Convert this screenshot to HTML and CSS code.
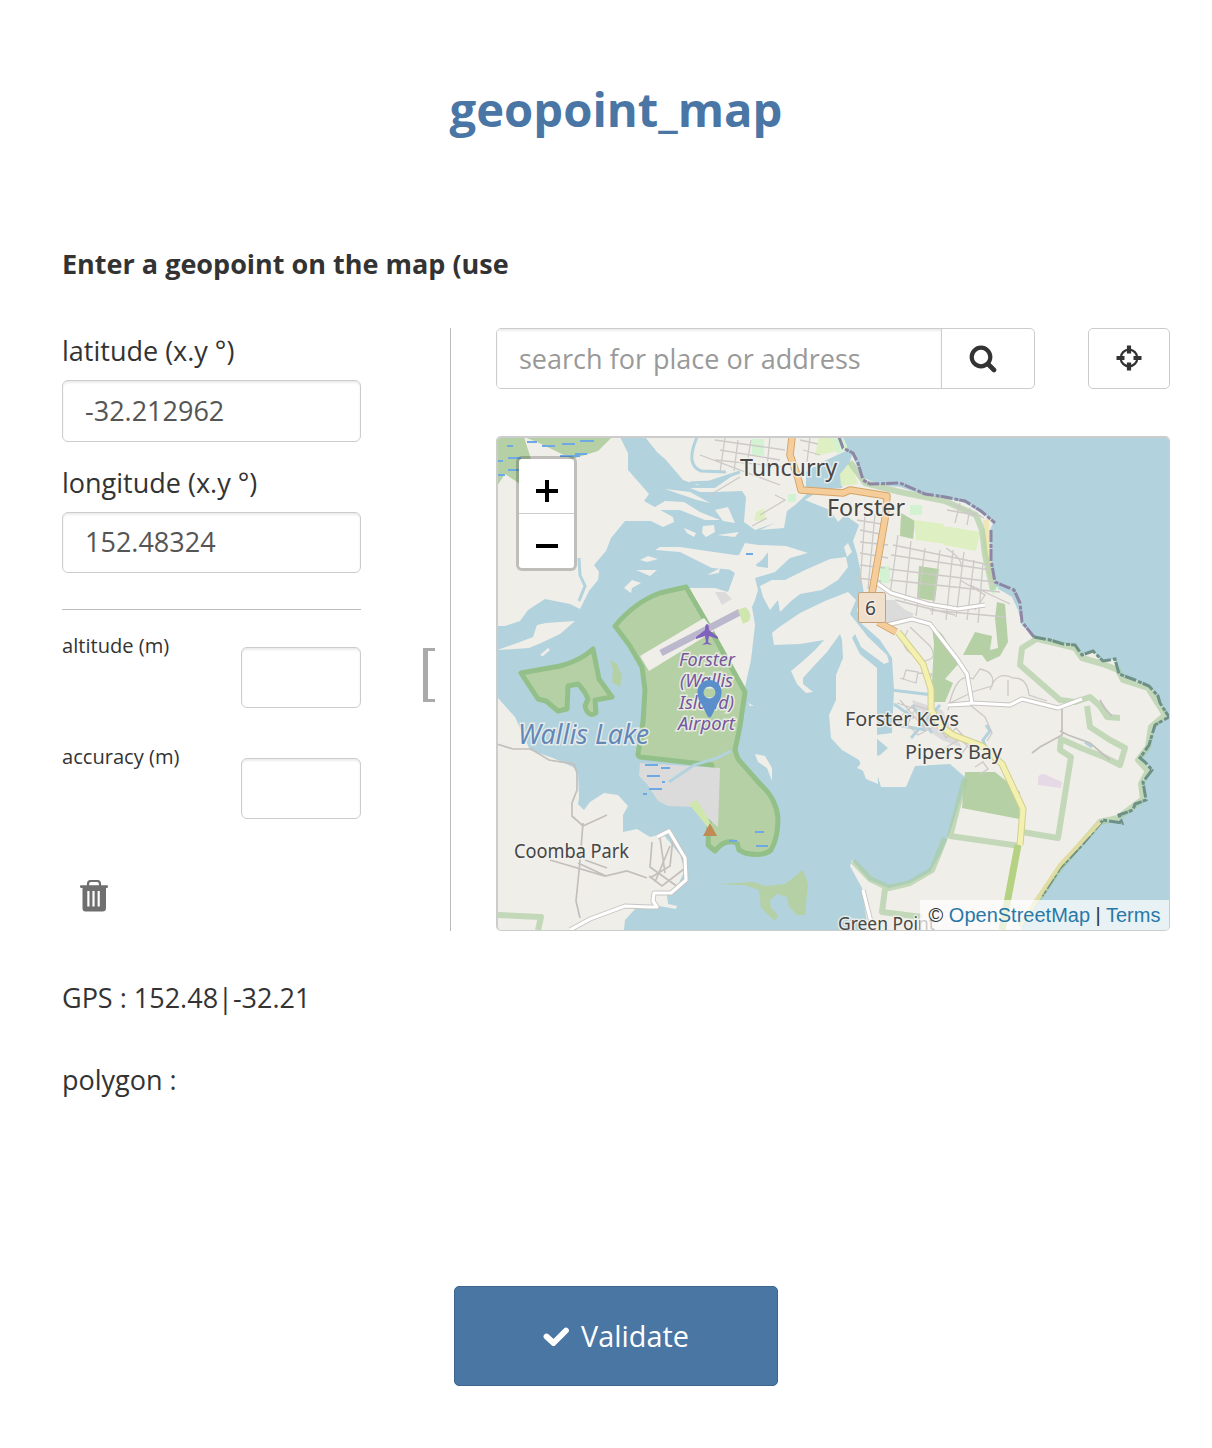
FILE: index.html
```html
<!DOCTYPE html>
<html lang="en">
<head>
<meta charset="utf-8">
<title>geopoint_map</title>
<link rel="stylesheet" href="styles.css">
</head>
<body>
<main class="form">
  <h1 class="title">geopoint_map</h1>
  <h2 class="question">Enter a geopoint on the map (use</h2>
  <section class="geo">
    <div class="coords">
      <label class="big">latitude (x.y °)<input class="field" value="-32.212962"></label>
      <label class="big second">longitude (x.y °)<input class="field" value="152.48324"></label>
      <hr class="rule">
      <label class="small"><span>altitude (m)</span><input class="field"></label>
      <label class="small"><span>accuracy (m)</span><input class="field"></label>
      <button class="trash" aria-label="Clear">
        <svg width="28" height="32" viewBox="0 0 28 32"><path d="M8 6V4q0-3 3-3h6q3 0 3 3v2" fill="none" stroke="#6f6f6f" stroke-width="2.2"/><path fill="#6f6f6f" fill-rule="evenodd" d="M1 5.300h26q1 0 1 1.300t-1 1.300h-1V28q0 3.500-3.500 3.500h-17Q2.500 31.500 2.500 28V8H1Q0 8 0 6.600T1 5.300ZM7.300 11v15.500h2.200V11Zm5.100 0v15.500h2.200V11Zm5.200 0v15.500h2.200V11Z"/></svg>
      </button>
    </div>
    <div class="gutter"><span class="bracket"></span></div>
    <div class="mapside">
      <div class="tools">
        <div class="search"><input class="query" placeholder="search for place or address"><button class="go" aria-label="Search"><svg width="28" height="28" viewBox="0 0 28 28" fill="none" stroke="#333"><circle cx="12" cy="12" r="9.300" stroke-width="4.200"/><path d="M19 19l6 6" stroke-width="4.600" stroke-linecap="round"/></svg></button></div>
        <button class="locate" aria-label="Locate"><svg width="26" height="26" viewBox="0 0 26 26" fill="none" stroke="#333"><circle cx="13" cy="13" r="8.300" stroke-width="2.200"/><path d="M13 .5v8M13 17.500v8M.5 13h8M17.500 13h8" stroke-width="4.200"/></svg></button>
      </div>
      <div class="map">
        <svg class="tiles" viewBox="498 438 671 492" preserveAspectRatio="none">
          <defs>
            <path id="east" d="M805 500 820 490 842 488 852 455 862 477 880 485 900 487 925 495 945 498 965 503 981 513 994 521 990 530 990 560 995 587 1012 597 1018 610 1022 625 1035 638 1050 640 1063 644 1075 645 1082 655 1093 651 1103 661 1115 659 1119 674 1135 680 1149 686 1158 696 1160 703 1169 717 1155 725 1149 745 1140 758 1145 762 1152 770 1143 782 1146 800 1135 804 1133 810 1119 815 1122 823 1103 820 1082 845 1060 868 1042 896 1020 930 868 930 862 888 850 866 852 860 869 880 889 888 910 883 930 872 941 853 950 832 962 795 966 778 950 764 915 766 906 787 881 787 878 777 857 768 863 761 880 755 888 748 876 738 876 735 892 733 894 690 892 658 880 640 862 624 857 610 864 594 860 569 857 554 853 541 859 525 845 515 838 522 830 510Z"/>
            <path id="airport" d="M615 626Q635 602 660 593L686 587 704 618 745 692 740 726 735 750 738 759 760 784Q776 798 778 818 778 838 771 850 763 857 745 853L739 850 737 843Q725 838 715 851L708 845 712 765 640 757Q638 756 638 754L643 722 645 690 642 667 630 646Z"/>
          </defs>
          <rect class="water" x="497" y="437" width="673" height="494"/>
          <g class="land">
            <path d="M497 437H620L628 453V470L649 494 644 501 673 517 674 522 663 527 651 521H625L611 538 606 551 594 565 599 572 598 580 589 591 583 603 580 609 570 604 545 599 528 610 520 621 505 626 497 626Z"/>
            <path d="M645 437 657 452 666 460 683 480 697 485 715 479 735 474 715 488 690 488 700 492 715 492 742 491 746 497 744 522 755 530 775 523 760 530 784 528 787 511 795 505 808 493 806 472 830 460 848 455 840 437Z"/>
            <path d="M497 650 520 642 533 637 537 625 546 623 575 621 560 634 541 643 529 648 515 649ZM540 655 548 648 550 650 543 656Z"/>
            <path d="M497 697 515 717 530 750 553 758 573 767 578 773 579 797 578 804 584 810 590 802 604 793 618 795 628 806 623 815 623 832 637 829 650 837 663 834 680 855 685 870 678 885 667 895 668 904 677 906 676 909 659 906 636 908 625 920 624 930 497 930Z"/>
            <path d="M655 550 660 547 680 547 700 550 735 555 755 566 768 568 768 553 760 545 786 546 808 553 790 558 775 572 755 578 758 590 755 600 752 607 755 625 751 660 745 687 700 620 686 588 715 588 728 592 736 570 712 568 680 552ZM684 528 696 533 694 537 687 533ZM703 526 714 525 715 532 706 537 702 533ZM640 560 648 556 658 559 647 562ZM636 570 657 570 650 576ZM624 588 632 580 641 583 632 588 631 593ZM707 575 720 568 719 573Z"/>
            <path d="M760 586 772 580 785 580 805 570 830 559 846 557 848 567 838 580 822 590 800 594 790 602 780 612 778 600 770 610 763 597Z"/>
            <path d="M715 510 728 507 735 523 723 521ZM717 535 739 532 735 537ZM739 555 745 543 772 547 762 560 750 569 735 573 715 560ZM751 496 762 514 755 518 748 500Z"/>
            <path d="M715 557 745 555 757 566 745 573 718 565Z"/>
            <path d="M772 633 778 628 800 613 825 601 848 592 856 600 850 614 868 637 887 655 889 662 884 664 861 647 855 634 852 638 860 654 877 668 877 750 878 784 866 779 859 760 842 750 831 738 829 715 836 700 836 675 843 658 842 640 840 634 827 652 812 668 803 678 803 684 813 692 806 693 797 684 791 671 803 661 815 650 824 640 800 644 774 645Z"/>
            <path d="M650 510 665 501 684 502 700 512 720 520 705 520 680 510 668 510ZM665 489 690 492 710 503 697 500ZM844 547 848 543 852 552 847 557ZM772 781 767 768 758 762 755 754 765 756 772 768ZM748 703 754 706 750 706Z"/>
            <use href="#east"/>
          </g>
          <path class="water" d="M806 472 820 463 848 450 858 446 846 462 840 478 835 485 806 488Z"/>
          <g class="forest">
            <path d="M497 437h115l-14 14-26 8-35-17-13-5 7 22-11 25-15-10-8 12Z"/>
            <use href="#airport" class="edged"/>
            <path class="edged" d="M521 673 560 666q20-5 33-17l6 30 13 18-17 3 1 13q-8 5-11-7l3-7q-3-8-10-15l-10 2-1 23-9 2-12-10-8-2Z"/>
            <path d="m610 660 7 4 5 12-2 11-8-5 1-12ZM718 884l35-2 12 4 20-2 18-14 5 14-3 31-8 0-8-8-2-10-10-3-7 6 1 8 7 7-3 6-14-13-2-18-14-5Z"/>
            <path d="m901 513 14 8-2 18-13-3ZM919 566l20 3-4 32-18-3ZM932 626l10 8 18 28-15 17 8 4-8 19h-14l3-58ZM963 655l12-23 17 4-2 14 8-2-3-30 2-16 8 2 3 38-8 14-13 6-5-7ZM965 772h30l25 20-1 27-57-11Z"/>
          </g>
          <path fill="#dcdbdc" d="m640 763 80 5-2 59-23-20-27-1-10-5-11-17-8-8ZM886 600h8l10 9 10 5-8 8-20 2ZM715 592h10l7 7-10 6ZM912 700l30 10 20 38-20-8-24-16Z"/>
          <path fill="#f0eee9" d="m704 618 10 13-65 40-9-15Z"/>
          <path class="runway" d="m661 653 79-41"/>
          <path fill="#cfe6ad" d="m738 610 7-3q8 6 4 14l-6 3ZM689 804l8-4 15 25-3 4Z"/><path fill="#def0c2" d="M945 526l35 6-4 19-32-6ZM914 520l30 4 2 20-30-4ZM819 437h14l5 14-23 5ZM840 474l10-12 8 22-17 2ZM756 512l8-4 2 12-12 1Z"/>
          <path fill="#d2f2d2" d="M752 439h12v17h-12ZM880 566h10v17h-10ZM989 587h10l-6 8ZM833 437h14l0 12-10 5ZM788 494h8v8h-8ZM910 505h12v10h-12Z"/>
          <path fill="#eee8b8" d="m983 520 6-1 2 45 4 21-6-8-6-30Z"/>
          <g class="reserve">
            <path d="M850 462 865 483 900 492 945 501 976 515 982 530 985 555 993 590M1035 640 1022 648 1020 665 1060 700 1075 702 1090 697 1100 706 1107 717 1120 718M1087 706 1090 727 1110 740 1125 748 1120 765 1104 757 1081 748 1061 739 1060 750 1071 757 1058 838 1022 832M1033 638 1055 643 1075 648 1082 658 1103 664 1118 670 1123 680 1148 688 1165 715 1151 727 1148 747 1138 760 1148 771 1141 784 1143 799 1118 818 1100 822 1060 868 1020 926M965 779 950 836 1020 846M945 838 932 870 910 883 889 888 870 879 853 861M885 889 882 912 922 917M497 915 541 917 538 930"/>
          </g>
          <g class="coast"><path d="M839 437 843 448 853 453 858 463 863 480 870 484 900 483 925 494 945 497 965 501 981 511 995 523M991 530V560L995 582 1014 590 1020 603 1022 622 1034 637"/><path class="dark" d="M1034 637 1050 640 1063 644 1075 645 1082 655 1093 651 1103 661 1115 659 1119 674 1135 680 1149 686 1158 696 1160 703 1169 717 1155 725 1149 745 1140 758 1145 762 1152 770 1143 782 1146 800 1135 804 1133 810 1119 815 1122 823 1103 820 1082 845 1060 868 1042 896"/></g>
          <path class="water" d="M843 437 848 448 859 449 862 463 871 479 900 480 930 490 948 493 970 498 1000 518V437Z"/>
          <path class="stream" d="m579 558 1 17 5 11-6 15M697 437q-12 28 4 34l25 1M690 483l20-1 30-10M669 782l25-17 23-7 14-7M891 690l42 5M894 704l20 14M896 725l30 5M912 705l20 28M911 738l29-33M986 725l4 6-7 9 3 8M1085 742l7 5"/>
          <g class="streets">
            <path d="M715 440l70 10M720 450l60 10M715 460l70 7M725 438l-5 34M738 440l-4 31M751 440l-5 30M770 437l-3 30M700 455l80 30M740 477l-30 18M760 515l25-15-10-5M752 526l15-8M800 440l18 4M803 450l17 5M810 437l-3 25"/>
            <path d="m857 520 30 5M860 530l25 5M860 542l28 3M860 553l28 5M860 565l25 3M858 578l23 3M865 515l-5 70M875 514l-7 75M893 545l97 20M891 555l100 15M889 569l105 13M890 580l110 12M898 535l-8 60M911 541l-6 60M925 548l-9 68M940 550l-8 65M953 550l-7 70M964 552l-8 65M974 560l-7 60M983 563l-5 60M950 503l34 15M947 510l34 6M960 503l-5 20M970 508l-3 17M946 548q17 11 15 19M895 600l60 15M930 610l75 7M960 580l25 15-10 15M970 585l40 19"/>
            <path d="M908 630q-8 14 0 21l12 10q20 0 10-15l-20-19M903 680l3-10 12 2-2 11-16-5M918 673l14 1-5 10M948 710q8-40 25-31l7-10q16 3 12 17l-17 5-25 12M990 690q6-20 23-12 14-1 16 17l18 6M1008 680v16M970 705l15 12 7 16-5 8M897 703l18 6-8 17-15-8M900 700l24 28 5-18-15-5-14 12 18 18 15-8M934 718l12 20 10-10 14 15-8 10M945 748l15-9 16 15M975 767l8-5 5 7-8 5"/>
            <path class="lane" d="m497 744 16 5h18l18 11 25 4 3 9v17l-5 13v13l11 10 24-11M583 823l-3 38-4 40 4 17M550 860l55 16 22-5 20 7M578 863l28 13M585 860l22 8M650 878l20-12 3-28 10 15 1 16-22 17-13-10M652 842l-2 25 28 20M660 838l5 35M670 846l-15 36M1060 731l8 4 22 8 20 17M1062 705v30l-22 12-8 6M1100 700q5 10 12 16"/>
          </g>
          <path class="casing" d="m887 625 25-6 18 5 27 35 10 15 5 29-22 2M972 703l38 2 12-6 36 9 24-9M948 705l22-1M877 583l14 10 37 11 30 5 27-4M570 930l20-11 35-13 24 1h8l-4-6 1-8 17 0 15-13-1-22-16-27-12 6M863 890l10 40"/>
          <path class="road" d="m887 625 25-6 18 5 27 35 10 15 5 29-22 2M972 703l38 2 12-6 36 9 24-9M948 705l22-1M877 583l14 10 37 11 30 5 27-4M570 930l20-11 35-13 24 1h8l-4-6 1-8 17 0 15-13-1-22-16-27-12 6M863 890l10 40"/>
          <path class="yellow-edge" d="m898 632 25 32 8 25v20l9 17 13 9 29 11 20 18 21 45-3 36"/><path class="yellow" d="m898 632 25 32 8 25v20l9 17 13 9 29 11 20 18 21 45-3 36"/>
          <path fill="none" stroke="#b4d281" stroke-width="7" d="M1018 845 1002 930"/>
          <path fill="none" stroke="#e1dda0" stroke-width="4" d="M1100 822 1060 865 1020 925"/>
          <path class="orange-edge" d="m792 437-2 18 8 23 3 12 42 3 7-3 37 6-2 23-13 74M878 622l18 10"/><path class="orange" d="m792 437-2 18 8 23 3 12 42 3 7-3 37 6-2 23-13 74M878 622l18 10"/>
          <path fill="#e4d9e5" d="m1038 779q0-5 6-5l18 8-1 6-23-3Z"/>
          <path class="marsh" d="M527 442h10M542 446h13M562 444h13M580 441h14M507 446h6M508 458h13M497 461h6M508 470h11M497 475h8M560 456h20M575 454h12M645 765h13M661 768h9M647 776h13M662 782h3M649 789h13M643 794h4M755 832h9M756 846h12M729 841h8M746 554h7"/>
          <path fill="#c18b55" d="m703 836 7-13 7 13Z"/>
          <rect x="858.500" y="592.500" width="27" height="30" rx="2" fill="#f0dfca" stroke="#c5a17b"/>
          <path fill="#7f62bb" d="M707 624q2 0 2 6l9 7v2l-9-3-1 6 4 3-5-1-5 1 4-3-1-6-9 3v-2l9-7q0-6 2-6Z"/>
          <g class="labels">
            <text x="740" y="476" font-size="23.500" textLength="97" lengthAdjust="spacingAndGlyphs">Tuncurry</text>
            <text x="827" y="515.500" font-size="23.500" textLength="78" lengthAdjust="spacingAndGlyphs">Forster</text>
            <text x="865" y="614.500" font-size="19">6</text>
            <text x="845" y="726" font-size="19.500" textLength="114" lengthAdjust="spacingAndGlyphs">Forster Keys</text>
            <text x="905" y="759" font-size="19.500" textLength="97" lengthAdjust="spacingAndGlyphs">Pipers Bay</text>
            <text x="514" y="858" font-size="19" textLength="115" lengthAdjust="spacingAndGlyphs">Coomba Park</text>
            <text x="838" y="930" font-size="18" textLength="97" lengthAdjust="spacingAndGlyphs">Green Point</text>
            <text class="lake" x="518" y="743.500" font-size="27" textLength="131" lengthAdjust="spacingAndGlyphs">Wallis Lake</text>
            <g class="air"><text x="679" y="665.500" textLength="56" lengthAdjust="spacingAndGlyphs">Forster</text><text x="680" y="687" textLength="53" lengthAdjust="spacingAndGlyphs">(Wallis</text><text x="679" y="708.500" textLength="55" lengthAdjust="spacingAndGlyphs">Island)</text><text x="678" y="730" textLength="57" lengthAdjust="spacingAndGlyphs">Airport</text></g>
          </g>
          <path fill="#5b8fcc" fill-rule="evenodd" d="M709.500 680a12 12 0 0 1 12 12q0 7-4 12l-6 12q-2 3-4 0l-6-12q-4-5-4-12a12 12 0 0 1 12-12Zm0 6.500a6 6 0 1 0 0 12 6 6 0 0 0 0-12Z"/>
        </svg>
        <div class="zoom"><button aria-label="Zoom in"><svg width="22" height="22"><path d="M0 11h22M11 0v22" stroke="#000" stroke-width="4"/></svg></button><button aria-label="Zoom out"><svg width="22" height="22"><path d="M0 11h22" stroke="#000" stroke-width="4"/></svg></button></div>
        <div class="credit">© <a>OpenStreetMap</a> | <a>Terms</a></div>
      </div>
    </div>
  </section>
  <p class="note">GPS : 152.48|-32.21</p>
  <p class="note polygon">polygon :</p>
  <button class="validate"><svg width="26" height="20" viewBox="0 0 26 20"><path d="m3.500 10.500 7 6.500L23 4.500" fill="none" stroke="#fff" stroke-width="5.800" stroke-linecap="round"/></svg>Validate</button>
</main>
</body>
</html>
```
FILE: styles.css
```css
* { box-sizing: border-box; }
body { margin: 0; background: #fff; color: #333; font: 27px/38px "Open Sans", sans-serif; }
button, input { font: inherit; color: inherit; margin: 0; }
button { padding: 0; border: 0; background: none; }
svg { display: block; }
.form { height: 1448px; padding: 77px 42px 0 62px; display: flex; flex-direction: column; }
.title { margin: 0; height: 66px; text-align: center; font-size: 47.2px; line-height: 65px; color: #4a76a5; }
.question { margin: 102px 0 0; height: 38px; font-size: 27px; line-height: 38px; }
.geo { display: flex; height: 603px; margin-top: 45px; }
.coords { width: 299px; padding-top: 4px; }
.big { display: block; height: 110px; }
.big.second { margin-top: 22px; }
.field { display: block; width: 100%; height: 62px; margin-top: 10px; padding: 0 22px 2px; border: 1px solid #ccc; border-radius: 6px; color: #555; box-shadow: inset 0 2px 2px rgba(0,0,0,.075); background: #fff; }
.second .field { height: 61px; }
.rule { height: 1px; margin: 35px 0 22px; border: 0; background: #bbb; }
.small { display: flex; justify-content: space-between; align-items: flex-end; height: 76px; margin-bottom: 35px; font-size: 20.100px; line-height: 28px; }
.small span { align-self: flex-start; }
.small .field { width: 120px; height: 61px; margin: 0; }
.trash { margin: 26px 0 0 18px; }
.gutter { width: 90px; border-right: 1px solid #bbb; padding: 320px 0 0 62px; }
.bracket { display: block; width: 12px; height: 54px; border: solid #aaa; border-width: 3px 0 3px 5px; }
.mapside { width: 674px; margin-left: 45px; }
.tools { display: flex; justify-content: space-between; height: 61px; }
.search { display: flex; width: 539px; border: 1px solid #ccc; border-radius: 5px; overflow: hidden; }
.query { width: 445px; border: 0; border-right: 1px solid #ccc; padding: 0 22px; box-shadow: inset 0 2px 2px rgba(0,0,0,.075); }
.query::placeholder { color: #999; opacity: 1; }
.go { width: 92px; padding: 0 0 0 27px; }
.locate { display: grid; place-items: center; width: 82px; padding-bottom: 2px; border: 1px solid #ccc; border-radius: 5px; }
.map { position: relative; height: 495px; margin-top: 47px; border: 1px solid #ccc; border-width: 2px 1px 1px 2px; border-radius: 5px; overflow: hidden; }
.tiles { width: 100%; height: 100%; }
.water { fill: #b2d2dd; }
.land { fill: #f0eee9; }
.forest { fill: #b5d0a5; }
.edged { stroke: #93c088; stroke-width: 5; stroke-linejoin: round; }
.runway { fill: none; stroke: #bbb7cc; stroke-width: 7; }
.reserve { fill: none; stroke: #a9cda0; stroke-opacity: .65; stroke-width: 6; stroke-linejoin: round; }
.coast { fill: none; stroke: #8d87a5; stroke-width: 3; stroke-dasharray: 12 2 4 1; }
.coast .dark { stroke: #6d9186; }
.stream { fill: none; stroke: #b2d2dd; stroke-width: 3; }
.streets { fill: none; stroke: #ccc9c7; stroke-width: 1.3; }
.lane { stroke: #c2bfbc; stroke-width: 1.7; }
.casing, .road, .yellow, .yellow-edge, .orange, .orange-edge { fill: none; stroke-linejoin: round; }
.casing { stroke: #c8c4c1; stroke-width: 5; }
.road { stroke: #fff; stroke-width: 3.2; }
.yellow-edge { stroke: #d1cf91; stroke-width: 7; }
.yellow { stroke: #f4f1b0; stroke-width: 5; }
.orange-edge { stroke: #d5a365; stroke-width: 7.5; }
.orange { stroke: #f5cd9b; stroke-width: 5.7; }
.marsh { fill: none; stroke: #6fa9e3; stroke-width: 2; }
.labels { font-family: "Noto Sans", sans-serif; fill: #464646; stroke: #f4f2ee; stroke-opacity: .8; stroke-width: 3; paint-order: stroke; }
.lake { fill: #6388b7; font-style: italic; }
.air { fill: #75569f; font-style: italic; font-size: 18px; }
.zoom { position: absolute; left: 18px; top: 18px; width: 61px; height: 115px; border: 3px solid rgba(0,0,0,.2); border-radius: 6px; background: #fff; background-clip: padding-box; }
.zoom button { display: grid; place-items: center; width: 100%; height: 55px; padding-top: 9px; }
.zoom button:first-child { height: 54px; }
.zoom button + button { border-top: 1px solid #ccc; }
.credit { position: absolute; right: 0; bottom: 0; width: 249px; height: 30px; background: rgba(255,255,255,.7); font: 20px/30px "Liberation Sans", sans-serif; text-align: center; white-space: nowrap; }
.credit a { color: #2878a8; }
.note { margin: 48px 0 0; }
.polygon { margin-top: 44px; }
.validate { display: flex; align-items: center; justify-content: center; gap: 12px; width: 324px; height: 100px; margin: 187px auto 0; border: 1px solid #3d658e; border-radius: 5px; background: #4a76a4; color: #fff; font-size: 28.800px; }
```
